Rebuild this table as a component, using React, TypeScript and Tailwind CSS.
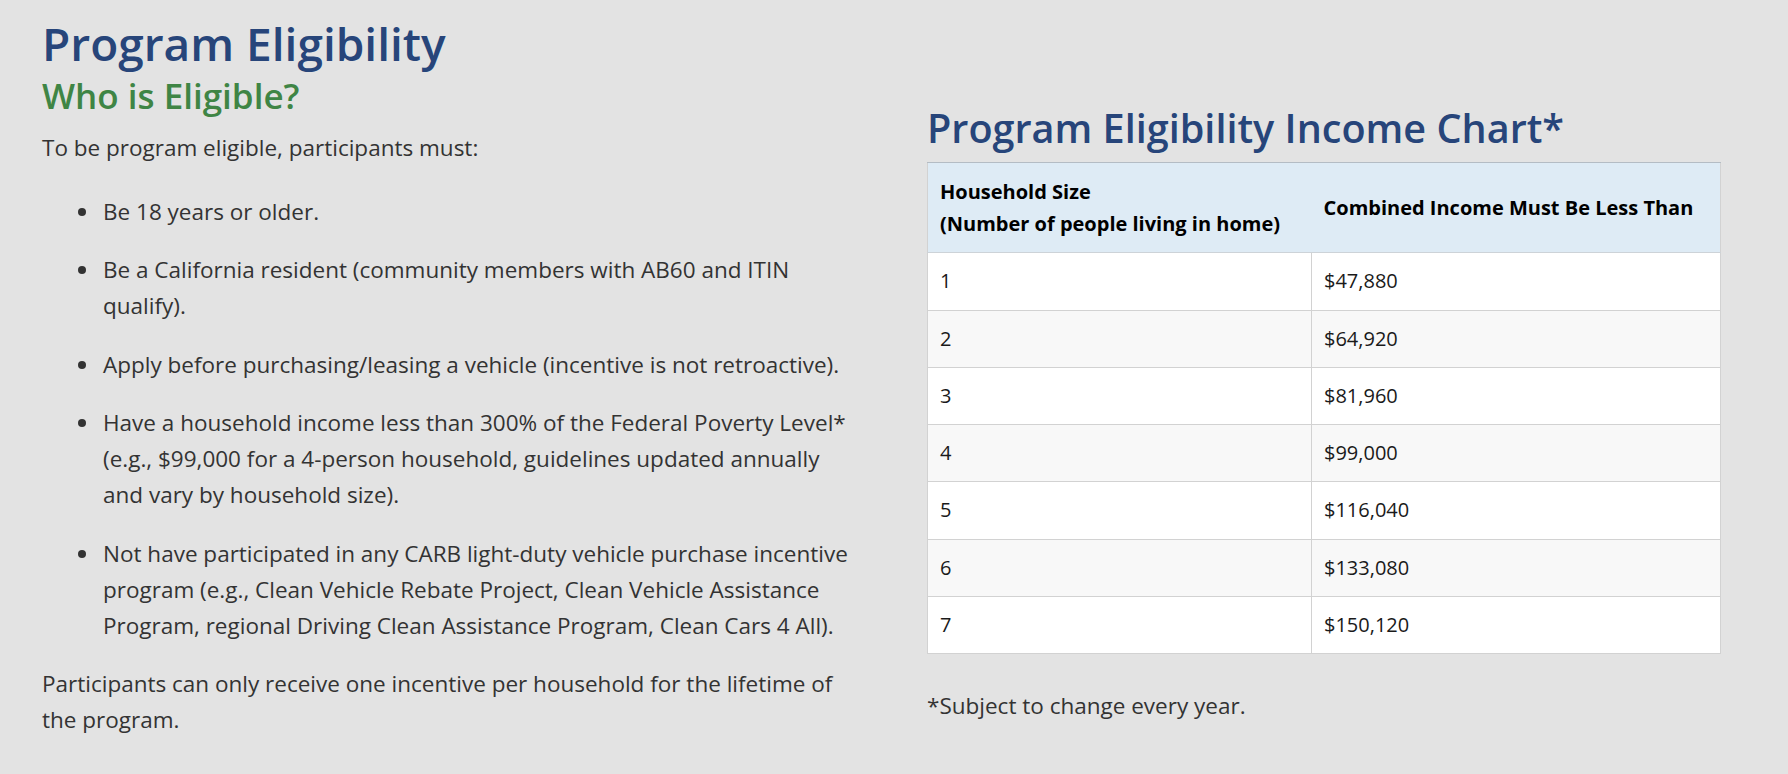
const rows = [
  { size: '1', income: '$47,880' },
  { size: '2', income: '$64,920' },
  { size: '3', income: '$81,960' },
  { size: '4', income: '$99,000' },
  { size: '5', income: '$116,040' },
  { size: '6', income: '$133,080' },
  { size: '7', income: '$150,120' },
]

const criteria = [
  'Be 18 years or older.',
  'Be a California resident (community members with AB60 and ITIN qualify).',
  'Apply before purchasing/leasing a vehicle (incentive is not retroactive).',
  'Have a household income less than 300% of the Federal Poverty Level* (e.g., $99,000 for a 4-person household, guidelines updated annually and vary by household size).',
  'Not have participated in any CARB light-duty vehicle purchase incentive program (e.g., Clean Vehicle Rebate Project, Clean Vehicle Assistance Program, regional Driving Clean Assistance Program, Clean Cars 4 All).',
]

const App = () => {
  return (
    <div className="min-h-[774px] w-full bg-[#e3e3e3] font-['Open_Sans',sans-serif] text-[#333]">
      <div className="flex gap-[70px] pl-[42px]">
        <section className="w-[815px]">
          <h1 className="pt-[15px] text-[46px] font-semibold leading-[56px] text-[#27457a]">Program Eligibility</h1>
          <h2 className="mt-[4.4px] text-[35px] font-semibold leading-[42px] text-[#3f8545]">Who is Eligible?</h2>
          <p className="mt-[12.6px] text-[22.5px] leading-[36px]">To be program eligible, participants must:</p>
          <ul className="mt-[27.7px] list-disc pl-[59px] text-[22.5px] leading-[36px] marker:text-[#333]">
            {criteria.map((item) => (
              <li key={item} className="mb-[22.5px] pl-[2px]">
                {item}
              </li>
            ))}
          </ul>
          <p className="text-[22.5px] leading-[36px]">
            Participants can only receive one incentive per household for the lifetime of the program.
          </p>
        </section>

        <section className="w-[794px] pt-[103.5px]">
          <h2 className="mb-[10.8px] text-[39.6px] font-semibold leading-[48px] text-[#27457a]">
            Program Eligibility Income Chart*
          </h2>
          <table className="w-full border-collapse border border-[#d2d2d2] text-[20px] text-[#1a1a1a]">
            <thead>
              <tr className="border-t border-[#b4bcc4] bg-[#deebf5]">
                <th className="w-[384px] border-b border-[#cdd3d8] px-[12px] py-[12.5px] text-left font-bold leading-[32px] text-black">
                  Household Size
                  <br />
                  (Number of people living in home)
                </th>
                <th className="border-b border-[#cdd3d8] px-[12px] py-[12.5px] text-left font-bold leading-[32px] text-black">
                  Combined Income Must Be Less Than
                </th>
              </tr>
            </thead>
            <tbody>
              {rows.map((row, i) => (
                <tr key={row.size} className={i % 2 === 0 ? 'bg-white' : 'bg-[#f8f8f8]'}>
                  <td className="border border-[#d2d2d2] px-[12px] py-[12px] leading-[32.25px]">{row.size}</td>
                  <td className="border border-[#d2d2d2] px-[12px] py-[12px] leading-[32.25px]">{row.income}</td>
                </tr>
              ))}
            </tbody>
          </table>
          <p className="mt-[33.5px] text-[22.5px] leading-[36px] text-[#333]">*Subject to change every year.</p>
        </section>
      </div>
    </div>
  )
}

export default App
